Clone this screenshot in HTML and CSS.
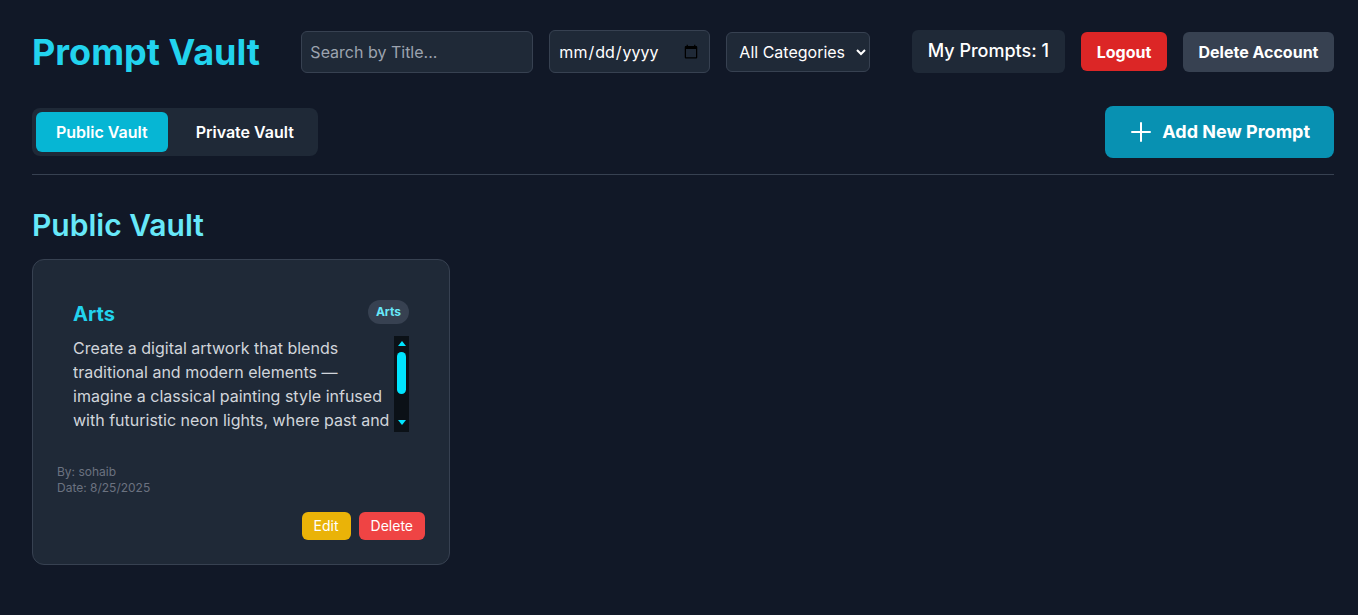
FILE: index.html
```html
<!DOCTYPE html>
<html lang="en">
<head>
<meta charset="utf-8">
<title>Prompt Vault</title>
<link rel="stylesheet" href="styles.css">
</head>
<body>
<div class="page">
  <header class="topbar">
    <h1 class="brand">Prompt Vault</h1>
    <div class="filters">
      <input class="field search" type="text" placeholder="Search by Title...">
      <input class="field date" type="date">
      <select class="field select">
        <option>All Categories</option>
        <option>Arts</option>
      </select>
    </div>
    <div class="user">
      <div class="count">My Prompts: 1</div>
      <button class="btn logout">Logout</button>
      <button class="btn delacc">Delete Account</button>
    </div>
  </header>

  <div class="toolbar">
    <div class="tabs">
      <button class="tab active">Public Vault</button>
      <button class="tab">Private Vault</button>
    </div>
    <button class="add">
      <svg class="plus" width="24" height="24" viewBox="0 0 24 24" fill="none" stroke="currentColor" stroke-width="2" stroke-linecap="round"><path d="M12 3v18M3 12h18"/></svg>
      <span>Add New Prompt</span>
    </button>
  </div>

  <h2 class="section-title">Public Vault</h2>

  <div class="grid">
    <div class="card">
      <div class="card-inner">
        <div class="card-head">
          <h3 class="card-title">Arts</h3>
          <span class="badge">Arts</span>
        </div>
        <div class="desc">
          <div class="desc-text">Create a digital artwork that blends traditional and modern elements — imagine a classical painting style infused with futuristic neon lights, where past and present collide in a vibrant celebration of color, texture and imagination that invites viewers to explore both worlds at once.</div>
          <div class="scrollbar" aria-hidden="true">
            <span class="arrow up"></span>
            <span class="thumb"></span>
            <span class="arrow down"></span>
          </div>
        </div>
      </div>
      <div class="meta">
        <div>By: sohaib</div>
        <div>Date: 8/25/2025</div>
      </div>
      <div class="actions">
        <button class="sbtn edit">Edit</button>
        <button class="sbtn del">Delete</button>
      </div>
    </div>
  </div>
</div>
</body>
</html>
```

FILE: styles.css
```css
* { box-sizing: border-box; }
html, body { margin: 0; padding: 0; }
body {
  background: #111827;
  color: #fff;
  font-family: Inter, "Noto Sans", sans-serif;
  min-height: 100vh;
}
.page { padding: 30px 24px 32px 32px; }
button { font-family: inherit; cursor: pointer; border: none; }

.topbar {
  display: flex;
  align-items: center;
  justify-content: space-between;
  margin-bottom: 33px;
}
.brand {
  margin: 0;
  font-size: 36px;
  line-height: 40px;
  font-weight: 700;
  color: #22d3ee;
}
.filters, .user {
  display: flex;
  align-items: center;
  gap: 16px;
}
.field {
  font-family: inherit;
  font-size: 16px;
  line-height: 24px;
  color: #fff;
  background: #1f2937;
  border: 1px solid #374151;
  border-radius: 6px;
  padding: 8px;
  outline: none;
}
.search { width: 232px; height: 42px; }
.search::placeholder { color: #9ca3af; }
.date { width: 161px; height: 43px; color-scheme: light; }
.date::-webkit-datetime-edit { color: #fff; }
.select { height: 40px; width: 144px; padding: 0 8px; color-scheme: dark; }
.count {
  background: #1f2937;
  border-radius: 6px;
  padding: 7px 16px 8px;
  font-size: 18px;
  line-height: 28px;
  font-weight: 500;
}
.btn {
  color: #fff;
  font-size: 16px;
  line-height: 24px;
  font-weight: 700;
  border-radius: 6px;
  padding: 8px 0;
  text-align: center;
}
.logout { background: #dc2626; height: 39px; width: 86px; }
.delacc { background: #374151; width: 151px; }

.toolbar {
  display: flex;
  align-items: center;
  justify-content: space-between;
  padding-bottom: 16px;
  border-bottom: 1px solid #374151;
}
.tabs {
  display: flex;
  gap: 8px;
  background: #1f2937;
  border-radius: 8px;
  padding: 4px;
}
.tab {
  background: transparent;
  color: #fff;
  font-size: 16px;
  line-height: 24px;
  font-weight: 600;
  padding: 8px 20px;
  border-radius: 6px;
}
.tab.active { background: #06b6d4; }
.add {
  display: flex;
  align-items: center;
  gap: 9px;
  background: #0891b2;
  color: #fff;
  font-size: 18px;
  line-height: 28px;
  font-weight: 700;
  padding: 12px 24px;
  border-radius: 8px;
}
.plus { display: block; }

.section-title {
  margin: 32px 0 16px;
  font-size: 30px;
  line-height: 36px;
  font-weight: 600;
  color: #67e8f9;
}

.grid {
  display: grid;
  grid-template-columns: repeat(3, 1fr);
  gap: 24px;
}
.card {
  background: #1f2937;
  border: 1px solid #374151;
  border-radius: 12px;
  padding: 24px;
  display: flex;
  flex-direction: column;
}
.card-inner { padding: 16px; }
.card-head {
  display: flex;
  justify-content: space-between;
  align-items: flex-start;
  margin-bottom: 8px;
}
.card-title {
  margin: 0;
  font-size: 20px;
  line-height: 28px;
  font-weight: 700;
  color: #22d3ee;
}
.badge {
  background: #374151;
  color: #67e8f9;
  font-size: 12px;
  line-height: 16px;
  font-weight: 700;
  border-radius: 9999px;
  padding: 4px 8px;
}
.desc {
  display: flex;
  height: 96px;
}
.desc-text {
  flex: 1;
  min-width: 0;
  overflow: hidden;
  font-size: 16px;
  line-height: 24px;
  color: #d1d5db;
}
.scrollbar {
  width: 15px;
  flex: none;
  background: #0b1117;
  display: flex;
  flex-direction: column;
  align-items: center;
}
.arrow {
  width: 0;
  height: 0;
  border-left: 4.5px solid transparent;
  border-right: 4.5px solid transparent;
}
.arrow.up {
  margin-top: 5px;
  border-bottom: 5px solid #00e5ff;
}
.arrow.down {
  margin-top: auto;
  margin-bottom: 7px;
  border-top: 5px solid #00e5ff;
}
.thumb {
  width: 9px;
  height: 42px;
  margin-top: 6px;
  border-radius: 5px;
  background: #00e5ff;
}
.meta {
  margin-top: 16px;
  font-size: 12px;
  line-height: 16px;
  color: #6b7280;
}
.actions {
  margin-top: 16px;
  display: flex;
  justify-content: flex-end;
  gap: 8px;
}
.sbtn {
  color: #fff;
  font-size: 14px;
  line-height: 20px;
  padding: 4px 12px;
  border-radius: 6px;
}
.edit { background: #eab308; }
.del { background: #ef4444; }
```
